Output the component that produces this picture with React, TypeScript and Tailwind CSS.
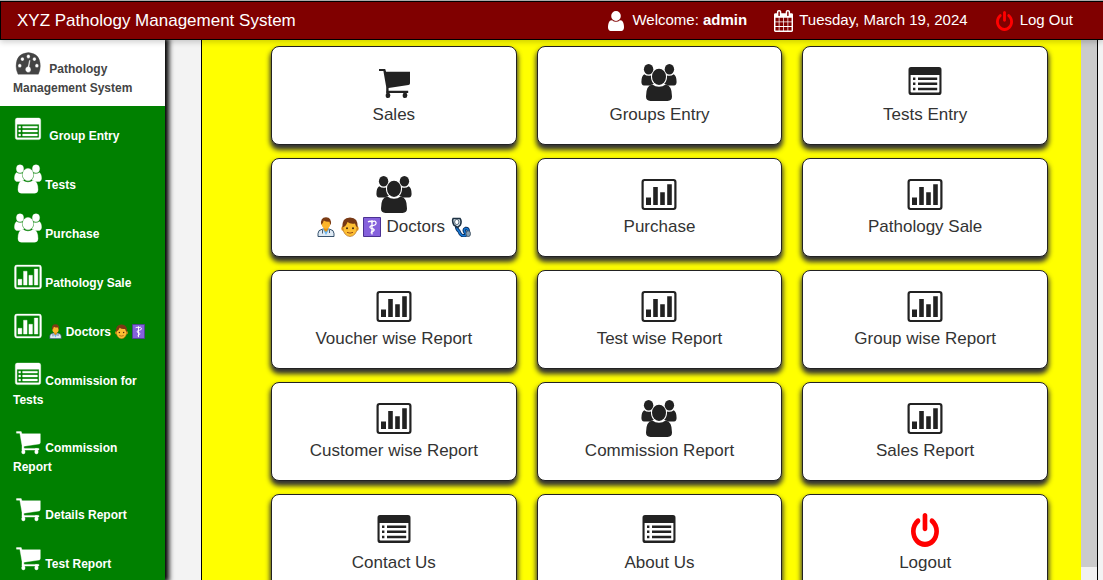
import React from "react";

type IconName = "cart" | "users" | "list" | "bars" | "power" | "gauge";

const POWER_PATH =
  "M1664 896q0 156-61 298t-164 245-245 164-298 61-298-61-245-164-164-245-61-298q0-182 80.5-343t226.5-270q43-32 95.5-25t83.5 50q32 42 24.5 94.5t-49.5 84.5q-98 74-151.5 181t-53.5 228q0 104 40.5 198.5t109.5 163.5 163.5 109.5 198.5 40.5 198.5-40.5 163.5-109.5 109.5-163.5 40.5-198.5q0-121-53.5-228t-151.5-181q-42-32-49.5-84.5t24.5-94.5q31-43 84-50t95 25q146 109 226.5 270t80.5 343zm-640-768v640q0 52-38 90t-90 38-90-38-38-90v-640q0-52 38-90t90-38 90 38 38 90z";

const USER_PATH =
  "M1536 1399q0 109-62.5 187t-150.5 78h-854q-88 0-150.5-78t-62.5-187q0-85 8.5-160.5t31.5-152 58.5-131 94-89 134.5-34.5q131 128 313 128t313-128q76 0 134.5 34.5t94 89 58.5 131 31.5 152 8.5 160.5zm-256-887q0 159-112.5 271.5t-271.5 112.5-271.5-112.5-112.5-271.5 112.5-271.5 271.5-112.5 271.5 112.5 112.5 271.5z";

const CALENDAR_PATH =
  "M192 1664h288v-288h-288v288zm352 0h320v-288h-320v288zm-352-352h288v-320h-288v320zm352 0h320v-320h-320v320zm-352-384h288v-288h-288v288zm736 736h320v-288h-320v288zm-384-736h320v-288h-320v288zm768 736h288v-288h-288v288zm-384-352h320v-320h-320v320zm-352-864v-288q0-13-9.5-22.5t-22.5-9.5h-64q-13 0-22.5 9.5t-9.5 22.5v288q0 13 9.5 22.5t22.5 9.5h64q13 0 22.5-9.5t9.5-22.5zm736 864h288v-320h-288v320zm-384-384h320v-288h-320v288zm384 0h288v-288h-288v288zm32-480v-288q0-13-9.5-22.5t-22.5-9.5h-64q-13 0-22.5 9.5t-9.5 22.5v288q0 13 9.5 22.5t22.5 9.5h64q13 0 22.5-9.5t9.5-22.5zm384-64v1280q0 52-38 90t-90 38h-1408q-52 0-90-38t-38-90v-1280q0-52 38-90t90-38h128v-96q0-66 47-113t113-47h64q66 0 113 47t47 113v96h384v-96q0-66 47-113t113-47h64q66 0 113 47t47 113v96h128q52 0 90 38t38 90z";

function Shape({ name }: { name: IconName }) {
  switch (name) {
    case "cart":
      return (
        <g>
          <path d="M3 6h6.2l.9 2.8H34v11.4q0 1.6-1.6 1.9L12.6 25v2.8h19.6v2.2H10.2V24L7.4 8H3z" />
          <ellipse cx="12" cy="32.4" rx="2.3" ry="2.6" />
          <ellipse cx="29" cy="32.4" rx="2.3" ry="2.6" />
          <path d="M10.6 28h2.6v4h-2.6zM27.6 28h2.8v4h-2.8z" />
        </g>
      );
    case "users":
      return (
        <g>
          <ellipse cx="7.6" cy="6.2" rx="4.7" ry="5.2" />
          <ellipse cx="28.4" cy="6.2" rx="4.7" ry="5.2" />
          <path d="M3.2 11.2q2 1.6 4.4 1.6 1.4 0 2.4-.4-.4 5.2 2.8 8.4Q10.2 21.8 9 22.6H3Q.4 22 .4 19 .4 13 3.2 11.2z" />
          <path d="M32.8 11.2q-2 1.6-4.4 1.6-1.4 0-2.4-.4.4 5.2-2.8 8.4 2.6 1 3.8 1.8h6q2.6-.6 2.6-3.6 0-6-2.8-7.8z" />
          <ellipse cx="18" cy="13.8" rx="7" ry="8.1" />
          <path d="M11.4 21.6q2.8 2.2 6.6 2.2t6.6-2.2Q31 22.4 31 33.5q0 4.4-4.4 4.4H9.4Q5 37.9 5 33.5q0-11.1 6.4-11.9z" />
        </g>
      );
    case "list":
      return (
        <path
          fillRule="evenodd"
          d="M4 4h28q2.5 0 2.5 2.8v22.4q0 2.8-2.5 2.8H4q-2.5 0-2.5-2.8V6.8Q1.5 4 4 4zM3.6 12v16.6q0 1 1 1h26.8q1 0 1-1V12zM6 14.6h2.4v2.4H6zM11 14.6h19.2v2.4H11zM6 19.6h2.4V22H6zM11 19.6h19.2V22H11zM6 24.8h2.4v2.4H6zM11 24.8h19.2v2.4H11z"
        />
      );
    case "bars":
      return (
        <path
          fillRule="evenodd"
          d="M3.5 4h29q3 0 3 3v25q0 3-3 3h-29q-3 0-3-3V7q0-3 3-3zM3.8 6q-1.1 0-1.1 1.2v24.6q0 1.2 1.1 1.2h28.4q1.1 0 1.1-1.2V7.2Q33.3 6 32.2 6zM5 22.5h5V30H5zM12.2 12h4.6v18h-4.6zM19.2 17.3h4.6V30h-4.6zM26.2 9.2h4.6V30h-4.6z"
        />
      );
    case "power":
      return (
        <g transform="translate(4 2) scale(0.0182 0.0205) translate(-128 0)">
          <path d={POWER_PATH} />
        </g>
      );
    case "gauge":
      return (
        <path
          fillRule="evenodd"
          d="M18.5 6Q34 7 34 23.5q0 5.5-2.5 10.5H5Q2.5 29 2.5 23.5 2.5 7 18.5 6zM18.5 8.5a2.3 2.5 0 1 0 .01 0zM10.7 12a2.3 2.5 0 1 0 .01 0zM26.3 12a2.3 2.5 0 1 0 .01 0zM7.3 20.5a2.3 2.5 0 1 0 .01 0zM29.5 20.5a2.3 2.5 0 1 0 .01 0zM19.5 15.5l1.6.3-1.2 8.7a3.7 3.9 0 1 1-2.2-.4z"
        />
      );
  }
}

function Icon({ name, className }: { name: IconName; className: string }) {
  return (
    <svg viewBox="0 0 36 39" fill="currentColor" className={className} aria-hidden="true">
      <Shape name={name} />
    </svg>
  );
}

function HealthWorker({ className }: { className: string }) {
  return (
    <svg viewBox="0 0 18 20" preserveAspectRatio="none" className={className} role="img" aria-label="Health worker">
      <path d="M1 19.5v-3q0-3.5 4-4.200l4-.8 4 .8q4 .7 4 4.200v3z" fill="#dfeaf4" stroke="#23415e" strokeWidth=".9" />
      <path d="M6 12.5l3 5.500 3-5.500z" fill="#69b5ee" />
      <path d="M5.5 13v3.500M12.500 13v3" stroke="#4a5f74" fill="none" />
      <path d="M7 10h4v3l-2 2-2-2z" fill="#e08f18" />
      <ellipse cx="9" cy="6.5" rx="4.4" ry="5.3" fill="#fdb52b" />
      <path d="M4.2 8Q3 .3 9 .3T13.8 8q-1-.8-1.300-3.200Q9 5 6.800 3.500 6 6.500 4.200 8z" fill="#7b3b14" />
    </svg>
  );
}

function Face({ className }: { className: string }) {
  return (
    <svg viewBox="0 0 18 20" preserveAspectRatio="none" className={className} role="img" aria-label="Man">
      <ellipse cx="1.8" cy="11.5" rx="1.5" ry="2.2" fill="#e8961c" />
      <ellipse cx="16.2" cy="11.5" rx="1.5" ry="2.2" fill="#e8961c" />
      <ellipse cx="9" cy="10.5" rx="7.2" ry="9" fill="#fdbe33" stroke="#a55c12" strokeWidth=".6" />
      <path d="M1.5 10.5Q.5.5 9 .5t7.5 10q-1.700-.5-2.500-4-5 .8-7.500-1.500Q5 9.500 1.500 10.500z" fill="#783915" />
      <circle cx="6" cy="11.3" r="1" fill="#442611" />
      <circle cx="12" cy="11.3" r="1" fill="#442611" />
      <path d="M6 15.4q3 1.500 6 0" stroke="#9c4e12" strokeWidth="1" fill="none" />
    </svg>
  );
}

function MedicalSign({ className }: { className: string }) {
  return (
    <svg viewBox="0 0 18 20" preserveAspectRatio="none" className={className} role="img" aria-label="Medical symbol">
      <path d="M.5.5h17v19H.5z" fill="#8561dc" stroke="#4b3192" />
      <path d="M9 3v14.5" stroke="#fff" strokeWidth="1.3" />
      <path d="M5 5q2-1.500 4 0 3-1.800 4 .5.5 2.300-2.500 2.800-4 .5-3.500 2.200.5 1 3 1.300 2 .8.500 2.200-3 .6-2 2.300" stroke="#fff" strokeWidth="1.3" fill="none" />
    </svg>
  );
}

function Stethoscope({ className }: { className: string }) {
  return (
    <svg viewBox="0 0 20 20" className={className} role="img" aria-label="Stethoscope">
      <path d="M5.5 9.5Q6 13 7.800 14q1.700 4.800 5 4.800 3.200 0 1.500-3-2.300-3.300.2-4.300 2.800-.5 2.800 3" stroke="#0b2f60" strokeWidth="3.4" fill="none" />
      <path d="M5.5 9.5Q6 13 7.800 14q1.700 4.800 5 4.800 3.200 0 1.500-3-2.300-3.300.2-4.300 2.800-.5 2.800 3" stroke="#1678d4" strokeWidth="1.6" fill="none" />
      <path d="M2.8 8Q.8 3.500 2.200 1.500H9q2 2.500.3 6.500L6.500 10.500z" fill="#dfe9ee" stroke="#1e3244" strokeWidth="1.6" />
      <ellipse cx="5.8" cy="5" rx="2.2" ry="2.6" fill="#fff" stroke="#44586a" strokeWidth=".9" />
      <ellipse cx="17.2" cy="16.7" rx="2.3" ry="2.9" fill="#8ba0b1" stroke="#33475a" strokeWidth=".8" />
    </svg>
  );
}

const smallEmoji = "inline-block h-[15px] w-[13px] align-[-3px]";
const largeEmoji = "h-5 w-[18px]";

const menu: { icon: IconName; label: React.ReactNode; wide?: boolean; kind?: "active" | "double" }[] = [
  { icon: "gauge", label: "Pathology Management System", wide: true, kind: "active" },
  { icon: "list", label: "Group Entry", wide: true },
  { icon: "users", label: "Tests" },
  { icon: "users", label: "Purchase" },
  { icon: "bars", label: "Pathology Sale" },
  {
    icon: "bars",
    wide: true,
    label: (
      <>
        <HealthWorker className={smallEmoji} /> Doctors{" "}
        <span className="inline-flex gap-1 pl-px align-[-3px]">
          <Face className="h-[15px] w-[13px]" />
          <MedicalSign className="h-[15px] w-[13px]" />
        </span>
      </>
    ),
  },
  { icon: "list", label: "Commission for Tests", kind: "double" },
  { icon: "cart", label: "Commission Report", kind: "double" },
  { icon: "cart", label: "Details Report" },
  { icon: "cart", label: "Test Report" },
];

const itemStyles = {
  active: "block bg-white pt-2 pr-3 pb-2 pl-[13px] text-[#444]",
  double: "block pt-[9px] pr-3 pb-2 pl-[13px]",
  single: "block py-[9px] pr-3 pl-[13px]",
};

const cards: { icon: IconName; label: React.ReactNode; red?: boolean }[] = [
  { icon: "cart", label: "Sales" },
  { icon: "users", label: "Groups Entry" },
  { icon: "list", label: "Tests Entry" },
  {
    icon: "users",
    label: (
      <span className="flex items-center justify-center gap-[6px]">
        <HealthWorker className={largeEmoji} />
        <span className="flex gap-1">
          <Face className={largeEmoji} />
          <MedicalSign className={largeEmoji} />
        </span>
        Doctors
        <Stethoscope className="size-5" />
      </span>
    ),
  },
  { icon: "bars", label: "Purchase" },
  { icon: "bars", label: "Pathology Sale" },
  { icon: "bars", label: "Voucher wise Report" },
  { icon: "bars", label: "Test wise Report" },
  { icon: "bars", label: "Group wise Report" },
  { icon: "bars", label: "Customer wise Report" },
  { icon: "users", label: "Commission Report" },
  { icon: "bars", label: "Sales Report" },
  { icon: "list", label: "Contact Us" },
  { icon: "list", label: "About Us" },
  { icon: "power", label: "Logout", red: true },
];

export default function App() {
  return (
    <div className="flex h-screen flex-col overflow-hidden border-t border-[#aaa] bg-[#f3f3f3] font-['Liberation_Sans',Arial,sans-serif]">
      <header className="z-20 flex h-[39px] shrink-0 items-center border-y border-l border-black bg-[#800000] pr-[30px] pl-4 text-[15px] text-white shadow-[0_2px_6px_rgba(0,0,0,0.2)]">
        <h1 className="grow text-[17px]">XYZ Pathology Management System</h1>
        <div className="flex items-center gap-2">
          <svg viewBox="256 128 1280 1536" preserveAspectRatio="none" fill="currentColor" className="h-5 w-4" aria-hidden="true">
            <path d={USER_PATH} />
          </svg>
          <span>
            Welcome: <b>admin</b>
          </span>
        </div>
        <div className="ml-[27px] flex items-center gap-[6px]">
          <svg viewBox="64 0 1664 1792" preserveAspectRatio="none" fill="currentColor" className="h-[22px] w-[19px]" aria-hidden="true">
            <path d={CALENDAR_PATH} />
          </svg>
          <span>Tuesday, March 19, 2024</span>
        </div>
        <a href="#logout" className="ml-7 flex items-center gap-[7px]">
          <svg viewBox="128 0 1536 1664" preserveAspectRatio="none" fill="#f00" className="h-5 w-[17px]" aria-hidden="true">
            <path d={POWER_PATH} />
          </svg>
          Log Out
        </a>
      </header>

      <div className="flex min-h-0 grow">
        <nav className="z-10 w-[165px] shrink-0 bg-[green] text-xs leading-[19px] font-bold text-white shadow-[2px_0_5px_2px_#000]">
          {menu.map((item, i) => (
            <a key={i} href="#menu" className={itemStyles[item.kind ?? "single"]}>
              <Icon
                name={item.icon}
                className={
                  item.wide
                    ? "mr-1 ml-px inline-block h-[30px] w-7 stroke-current stroke-[0.5] align-[-5px]"
                    : "ml-px inline-block h-[30px] w-7 stroke-current stroke-[0.5] align-[-5px]"
                }
              />{" "}
              {item.label}
            </a>
          ))}
        </nav>

        <main className="mr-[5px] ml-9 flex grow border-x border-black">
          <ul className="grid grow auto-rows-[99px] grid-cols-3 gap-x-5 gap-y-[13px] bg-[#ff0] pt-[6px] pr-[33px] pl-[69px]">
            {cards.map((card, i) => (
              <li key={i} className="flex">
                <a
                  href="#open"
                  className="flex grow flex-col items-center rounded-lg border border-[#222] bg-white pt-4 text-[17px] leading-[26px] text-[#333] shadow-[0_4px_5px_1px_#333]"
                >
                  <Icon
                    name={card.icon}
                    className={card.red ? "h-[39px] w-9 text-[#f00]" : "h-[39px] w-9 text-[#222]"}
                  />
                  <span>{card.label}</span>
                </a>
              </li>
            ))}
          </ul>
          <div className="flex w-4 shrink-0 flex-col bg-[#f1f1f1]" aria-hidden="true">
            <div className="h-[97.5%] bg-[#cbcbcb]" />
          </div>
        </main>
      </div>
    </div>
  );
}
